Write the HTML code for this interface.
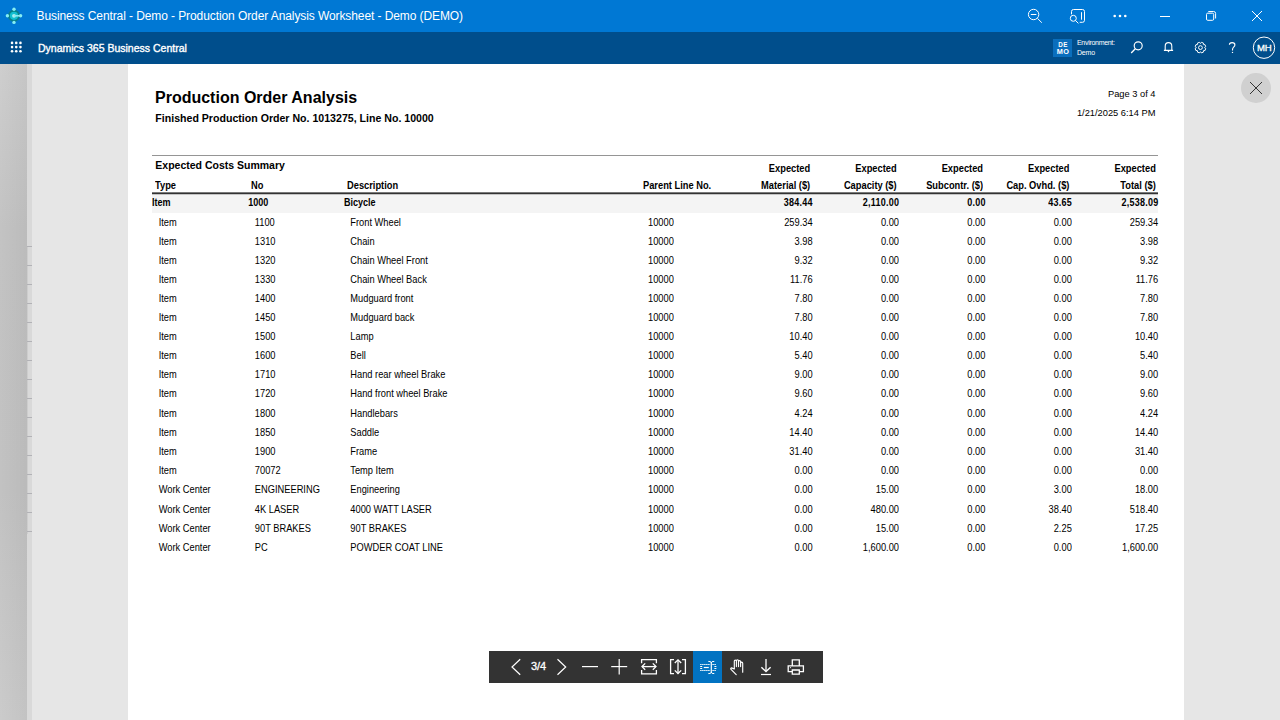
<!DOCTYPE html>
<html><head><meta charset="utf-8"><title>Production Order Analysis</title>
<style>
html,body{margin:0;padding:0;width:1280px;height:720px;overflow:hidden;background:#fff}
body{position:relative;font-family:"Liberation Sans", sans-serif}
div{box-sizing:border-box}
</style></head><body>
<div style="position:absolute;left:0;top:0;width:1280px;height:32px;background:#0078d4"></div>
<svg style="position:absolute;left:0;top:0" width="32" height="32" viewBox="0 0 32 32">
<rect x="8.7" y="10.5" width="10.6" height="10.6" rx="3.6" transform="rotate(45 14 15.8)" fill="#08808a"/>
<circle cx="14" cy="15.8" r="6" fill="#08808a"/>
<circle cx="14" cy="15.8" r="4.1" fill="#12bfd0"/>
<circle cx="14" cy="15.8" r="1.9" fill="#a6eef3"/>
<circle cx="14" cy="9.3" r="1.7" fill="#86eef3"/>
<circle cx="14" cy="22.4" r="1.7" fill="#86eef3"/>
<circle cx="7.4" cy="15.8" r="1.7" fill="#86eef3"/>
<circle cx="20.6" cy="15.8" r="1.7" fill="#86eef3"/>
<rect x="14" y="15" width="5.5" height="1.6" fill="#8fe6ee"/>
</svg>
<div style="position:absolute;left:36.5px;top:9.64px;font-size:12px;line-height:12px;font-weight:normal;color:#fff;white-space:nowrap;letter-spacing:-0.09px;">Business Central - Demo - Production Order Analysis Worksheet - Demo (DEMO)</div>
<svg style="position:absolute;left:1000px;top:0" width="280" height="32" viewBox="1000 0 280 32" fill="none" stroke="#fff" stroke-width="1">
<circle cx="1033.6" cy="14.5" r="5.2"/>
<line x1="1030.8" y1="14.5" x2="1036.4" y2="14.5"/>
<line x1="1037.4" y1="18.3" x2="1041.8" y2="22.7"/>
<path d="M1071.5 14.3 V11.5 a2 2 0 0 1 2 -2 H1082.5 a2 2 0 0 1 2 2 V20.3 a2 2 0 0 1 -2 2 H1079.7"/>
<line x1="1081.5" y1="12.2" x2="1081.5" y2="19.7"/>
<circle cx="1073.3" cy="18.3" r="3"/>
<line x1="1075.4" y1="20.4" x2="1078.4" y2="23.4"/>
<line x1="1160" y1="16.5" x2="1170" y2="16.5"/>
<rect x="1206.5" y="13.2" width="7.2" height="7.1" rx="1.2"/>
<path d="M1208.3 11.5 H1213.6 a2 2 0 0 1 2 2 V18.5"/>
<line x1="1252" y1="11" x2="1262" y2="21"/>
<line x1="1262" y1="11" x2="1252" y2="21"/>
</svg>
<svg style="position:absolute;left:1100px;top:0" width="40" height="32">
<circle cx="14.7" cy="16" r="1.3" fill="#fff"/><circle cx="20" cy="16" r="1.3" fill="#fff"/><circle cx="25.3" cy="16" r="1.3" fill="#fff"/>
</svg>
<div style="position:absolute;left:0;top:32px;width:1280px;height:32px;background:#004e8c"></div>
<svg style="position:absolute;left:0;top:0" width="40" height="64"><circle cx="12.05" cy="42.90" r="1.3" fill="#fff"/><circle cx="12.05" cy="47.10" r="1.3" fill="#fff"/><circle cx="12.05" cy="51.30" r="1.3" fill="#fff"/><circle cx="16.25" cy="42.90" r="1.3" fill="#fff"/><circle cx="16.25" cy="47.10" r="1.3" fill="#fff"/><circle cx="16.25" cy="51.30" r="1.3" fill="#fff"/><circle cx="20.45" cy="42.90" r="1.3" fill="#fff"/><circle cx="20.45" cy="47.10" r="1.3" fill="#fff"/><circle cx="20.45" cy="51.30" r="1.3" fill="#fff"/></svg>
<div style="position:absolute;left:38px;top:43.11px;font-size:10.5px;line-height:10.5px;font-weight:normal;color:#fff;white-space:nowrap;-webkit-text-stroke:0.35px #fff;">Dynamics 365 Business Central</div>
<div style="position:absolute;left:1053px;top:39px;width:19px;height:18px;background:#0a6ebd"></div>
<div style="position:absolute;left:763.0px;width:600px;text-align:center;top:41.57px;font-size:6.3px;line-height:6.3px;font-weight:bold;color:#fff;white-space:nowrap;letter-spacing:0.4px;">DE</div>
<div style="position:absolute;left:762.9000000000001px;width:600px;text-align:center;top:48.67px;font-size:6.3px;line-height:6.3px;font-weight:bold;color:#fff;white-space:nowrap;letter-spacing:0.2px;transform:scaleX(1.16);">MO</div>
<div style="position:absolute;left:1077px;top:39.07px;font-size:7px;line-height:7px;font-weight:normal;color:#fff;white-space:nowrap;letter-spacing:-0.3px;">Environment:</div>
<div style="position:absolute;left:1077px;top:48.87px;font-size:7px;line-height:7px;font-weight:normal;color:#fff;white-space:nowrap;letter-spacing:-0.2px;">Demo</div>
<svg style="position:absolute;left:1100px;top:32px" width="180" height="32" viewBox="1100 32 180 32" fill="none" stroke="#fff" stroke-width="1">
<circle cx="1138.2" cy="45.8" r="4" stroke-width="1.15"/>
<line x1="1135.3" y1="48.8" x2="1131.2" y2="53" stroke-width="1.3"/>
<path d="M1163.9 50.4 H1173.1 M1165.2 50.4 V46.2 C1165.2 43.8 1166.6 42.6 1168.5 42.6 C1170.4 42.6 1171.8 43.8 1171.8 46.2 V50.4" stroke-width="1.1"/>
<path d="M1167.5 50.9 L1168.5 52.5 L1169.5 50.9 Z" fill="#fff" stroke="none"/>
<path d="M1200.72 43.31 L1201.48 42.30 L1203.47 43.12 L1203.29 44.37 L1203.68 44.76 L1204.93 44.58 L1205.75 46.57 L1204.74 47.33 L1204.74 47.87 L1205.75 48.63 L1204.93 50.62 L1203.68 50.44 L1203.29 50.83 L1203.47 52.08 L1201.48 52.90 L1200.72 51.89 L1200.18 51.89 L1199.42 52.90 L1197.43 52.08 L1197.61 50.83 L1197.22 50.44 L1195.97 50.62 L1195.15 48.63 L1196.16 47.87 L1196.16 47.33 L1195.15 46.57 L1195.97 44.58 L1197.22 44.76 L1197.61 44.37 L1197.43 43.12 L1199.42 42.30 L1200.18 43.31 Z" stroke-width="1" stroke-linejoin="round"/>
<circle cx="1200.45" cy="47.6" r="1.9" stroke-width="1"/>
<path d="M1229.4 44.8 C1229.4 43.3 1230.6 42.6 1232.1 42.6 C1233.8 42.6 1234.9 43.6 1234.9 44.9 C1234.9 46.4 1233.6 47 1233 47.8 C1232.6 48.3 1232.5 48.9 1232.5 50.6" stroke-width="1.1"/>
<rect x="1231.9" y="51.9" width="1.2" height="1.1" fill="#fff" stroke="none"/>
<circle cx="1264" cy="47.7" r="10.7"/>
</svg>
<div style="position:absolute;left:964.2px;width:600px;text-align:center;top:42.97px;font-size:9.6px;line-height:9.6px;font-weight:normal;color:#fff;white-space:nowrap;letter-spacing:-0.2px;-webkit-text-stroke:0.3px #fff;">MH</div>
<div style="position:absolute;left:0;top:64px;width:1280px;height:656px;background:#e6e6e6"></div>
<div style="position:absolute;left:0;top:64px;width:27px;height:656px;background:linear-gradient(90deg,rgba(0,0,0,0),rgba(0,0,0,0.04)),linear-gradient(180deg,#cecece 0%,#c3c3c3 25%,#c2c2c2 65%,#cbcbcb 100%)"></div>
<div style="position:absolute;left:27px;top:64px;width:5px;height:656px;background:#d9d9d9"></div>
<div style="position:absolute;left:27px;top:246px;width:1px;height:288px;background:#cdcdcd"></div>
<div style="position:absolute;left:27px;top:245.80px;width:5px;height:1px;background:#b2b2b6"></div>
<div style="position:absolute;left:27px;top:264.81px;width:5px;height:1px;background:#b2b2b6"></div>
<div style="position:absolute;left:27px;top:283.82px;width:5px;height:1px;background:#b2b2b6"></div>
<div style="position:absolute;left:27px;top:302.83px;width:5px;height:1px;background:#b2b2b6"></div>
<div style="position:absolute;left:27px;top:321.84px;width:5px;height:1px;background:#b2b2b6"></div>
<div style="position:absolute;left:27px;top:340.85px;width:5px;height:1px;background:#b2b2b6"></div>
<div style="position:absolute;left:27px;top:359.86px;width:5px;height:1px;background:#b2b2b6"></div>
<div style="position:absolute;left:27px;top:378.87px;width:5px;height:1px;background:#b2b2b6"></div>
<div style="position:absolute;left:27px;top:397.88px;width:5px;height:1px;background:#b2b2b6"></div>
<div style="position:absolute;left:27px;top:416.89px;width:5px;height:1px;background:#b2b2b6"></div>
<div style="position:absolute;left:27px;top:435.90px;width:5px;height:1px;background:#b2b2b6"></div>
<div style="position:absolute;left:27px;top:454.91px;width:5px;height:1px;background:#b2b2b6"></div>
<div style="position:absolute;left:27px;top:473.92px;width:5px;height:1px;background:#b2b2b6"></div>
<div style="position:absolute;left:27px;top:492.93px;width:5px;height:1px;background:#b2b2b6"></div>
<div style="position:absolute;left:27px;top:511.94px;width:5px;height:1px;background:#b2b2b6"></div>
<div style="position:absolute;left:27px;top:530.95px;width:5px;height:1px;background:#b2b2b6"></div>
<div style="position:absolute;left:128px;top:64px;width:1056px;height:656px;background:#fff"></div>
<div style="position:absolute;left:1241px;top:72.5px;width:30px;height:30px;border-radius:50%;background:#d0d0d0"></div>
<svg style="position:absolute;left:1240px;top:72px" width="32" height="32" viewBox="1240 72 32 32" stroke="#333" stroke-width="1">
<line x1="1250" y1="82" x2="1262" y2="94"/><line x1="1262" y1="82" x2="1250" y2="94"/></svg>
<div style="position:absolute;left:155px;top:90.06px;font-size:16px;line-height:16px;font-weight:bold;color:#000;white-space:nowrap;">Production Order Analysis</div>
<div style="position:absolute;left:155.3px;top:112.53px;font-size:10.6px;line-height:10.6px;font-weight:bold;color:#000;white-space:nowrap;">Finished Production Order No. 1013275, Line No. 10000</div>
<div style="position:absolute;right:124.5px;top:90.23px;font-size:9.3px;line-height:9.3px;font-weight:normal;color:#000;white-space:nowrap;transform:scaleY(1.04);transform-origin:50% 4.54px;">Page 3 of 4</div>
<div style="position:absolute;right:124.5px;top:109.23px;font-size:9.3px;line-height:9.3px;font-weight:normal;color:#000;white-space:nowrap;transform:scaleY(1.04);transform-origin:50% 4.54px;">1/21/2025 6:14 PM</div>
<div style="position:absolute;left:152px;top:155px;width:1006px;height:1px;background:#959595"></div>
<div style="position:absolute;left:155.3px;top:159.71px;font-size:10.5px;line-height:10.5px;font-weight:bold;color:#000;white-space:nowrap;">Expected Costs Summary</div>
<div style="position:absolute;left:155px;top:182.03px;font-size:9.3px;line-height:9.3px;font-weight:bold;color:#000;white-space:nowrap;transform:scaleY(1.1);transform-origin:50% 4.54px;">Type</div>
<div style="position:absolute;left:251px;top:182.03px;font-size:9.3px;line-height:9.3px;font-weight:bold;color:#000;white-space:nowrap;transform:scaleY(1.1);transform-origin:50% 4.54px;">No</div>
<div style="position:absolute;left:347px;top:182.03px;font-size:9.3px;line-height:9.3px;font-weight:bold;color:#000;white-space:nowrap;transform:scaleY(1.1);transform-origin:50% 4.54px;">Description</div>
<div style="position:absolute;left:643px;top:182.03px;font-size:9.3px;line-height:9.3px;font-weight:bold;color:#000;white-space:nowrap;transform:scaleY(1.1);transform-origin:50% 4.54px;">Parent Line No.</div>
<div style="position:absolute;right:469.79999999999995px;top:164.73px;font-size:9.3px;line-height:9.3px;font-weight:bold;color:#000;white-space:nowrap;transform:scaleY(1.1);transform-origin:50% 4.54px;">Expected</div>
<div style="position:absolute;right:469.79999999999995px;top:182.03px;font-size:9.3px;line-height:9.3px;font-weight:bold;color:#000;white-space:nowrap;transform:scaleY(1.1);transform-origin:50% 4.54px;">Material ($)</div>
<div style="position:absolute;right:383.4px;top:164.73px;font-size:9.3px;line-height:9.3px;font-weight:bold;color:#000;white-space:nowrap;transform:scaleY(1.1);transform-origin:50% 4.54px;">Expected</div>
<div style="position:absolute;right:383.4px;top:182.03px;font-size:9.3px;line-height:9.3px;font-weight:bold;color:#000;white-space:nowrap;transform:scaleY(1.1);transform-origin:50% 4.54px;">Capacity ($)</div>
<div style="position:absolute;right:297px;top:164.73px;font-size:9.3px;line-height:9.3px;font-weight:bold;color:#000;white-space:nowrap;transform:scaleY(1.1);transform-origin:50% 4.54px;">Expected</div>
<div style="position:absolute;right:297px;top:182.03px;font-size:9.3px;line-height:9.3px;font-weight:bold;color:#000;white-space:nowrap;transform:scaleY(1.1);transform-origin:50% 4.54px;">Subcontr. ($)</div>
<div style="position:absolute;right:210.5999999999999px;top:164.73px;font-size:9.3px;line-height:9.3px;font-weight:bold;color:#000;white-space:nowrap;transform:scaleY(1.1);transform-origin:50% 4.54px;">Expected</div>
<div style="position:absolute;right:210.5999999999999px;top:182.03px;font-size:9.3px;line-height:9.3px;font-weight:bold;color:#000;white-space:nowrap;transform:scaleY(1.1);transform-origin:50% 4.54px;">Cap. Ovhd. ($)</div>
<div style="position:absolute;right:124.20000000000005px;top:164.73px;font-size:9.3px;line-height:9.3px;font-weight:bold;color:#000;white-space:nowrap;transform:scaleY(1.1);transform-origin:50% 4.54px;">Expected</div>
<div style="position:absolute;right:124.20000000000005px;top:182.03px;font-size:9.3px;line-height:9.3px;font-weight:bold;color:#000;white-space:nowrap;transform:scaleY(1.1);transform-origin:50% 4.54px;">Total ($)</div>
<div style="position:absolute;left:152px;top:192px;width:1006px;height:1px;background:#7a7a7a"></div>
<div style="position:absolute;left:152px;top:193px;width:1006px;height:1px;background:#333"></div>
<div style="position:absolute;left:152px;top:194px;width:1006px;height:1px;background:#c4c4c4"></div>
<div style="position:absolute;left:152px;top:195px;width:1006px;height:18px;background:#f4f4f4"></div>
<div style="position:absolute;left:152px;top:197.88px;font-size:9px;line-height:9px;font-weight:bold;color:#000;white-space:nowrap;transform:scaleY(1.2);transform-origin:50% 4.39px;">Item</div>
<div style="position:absolute;left:248.2px;top:197.88px;font-size:9px;line-height:9px;font-weight:bold;color:#000;white-space:nowrap;transform:scaleY(1.2);transform-origin:50% 4.39px;">1000</div>
<div style="position:absolute;left:344px;top:197.88px;font-size:9px;line-height:9px;font-weight:bold;color:#000;white-space:nowrap;transform:scaleY(1.2);transform-origin:50% 4.39px;">Bicycle</div>
<div style="position:absolute;right:467.15px;top:197.88px;font-size:9px;line-height:9px;font-weight:bold;color:#000;white-space:nowrap;transform:scaleY(1.2);transform-origin:50% 4.39px;letter-spacing:0.25px;">384.44</div>
<div style="position:absolute;right:380.75px;top:197.88px;font-size:9px;line-height:9px;font-weight:bold;color:#000;white-space:nowrap;transform:scaleY(1.2);transform-origin:50% 4.39px;letter-spacing:0.25px;">2,110.00</div>
<div style="position:absolute;right:294.35px;top:197.88px;font-size:9px;line-height:9px;font-weight:bold;color:#000;white-space:nowrap;transform:scaleY(1.2);transform-origin:50% 4.39px;letter-spacing:0.25px;">0.00</div>
<div style="position:absolute;right:207.95000000000005px;top:197.88px;font-size:9px;line-height:9px;font-weight:bold;color:#000;white-space:nowrap;transform:scaleY(1.2);transform-origin:50% 4.39px;letter-spacing:0.25px;">43.65</div>
<div style="position:absolute;right:121.54999999999995px;top:197.88px;font-size:9px;line-height:9px;font-weight:bold;color:#000;white-space:nowrap;transform:scaleY(1.2);transform-origin:50% 4.39px;letter-spacing:0.25px;">2,538.09</div>
<div style="position:absolute;left:158.7px;top:218.63px;font-size:9.3px;line-height:9.3px;font-weight:normal;color:#000;white-space:nowrap;transform:scaleY(1.15);transform-origin:50% 4.54px;">Item</div>
<div style="position:absolute;left:254.8px;top:218.63px;font-size:9.3px;line-height:9.3px;font-weight:normal;color:#000;white-space:nowrap;transform:scaleY(1.15);transform-origin:50% 4.54px;">1100</div>
<div style="position:absolute;left:350.3px;top:218.63px;font-size:9.3px;line-height:9.3px;font-weight:normal;color:#000;white-space:nowrap;transform:scaleY(1.15);transform-origin:50% 4.54px;">Front Wheel</div>
<div style="position:absolute;left:648px;top:218.63px;font-size:9.3px;line-height:9.3px;font-weight:normal;color:#000;white-space:nowrap;transform:scaleY(1.15);transform-origin:50% 4.54px;">10000</div>
<div style="position:absolute;right:467.4px;top:218.63px;font-size:9.3px;line-height:9.3px;font-weight:normal;color:#000;white-space:nowrap;transform:scaleY(1.15);transform-origin:50% 4.54px;">259.34</div>
<div style="position:absolute;right:381px;top:218.63px;font-size:9.3px;line-height:9.3px;font-weight:normal;color:#000;white-space:nowrap;transform:scaleY(1.15);transform-origin:50% 4.54px;">0.00</div>
<div style="position:absolute;right:294.6px;top:218.63px;font-size:9.3px;line-height:9.3px;font-weight:normal;color:#000;white-space:nowrap;transform:scaleY(1.15);transform-origin:50% 4.54px;">0.00</div>
<div style="position:absolute;right:208.20000000000005px;top:218.63px;font-size:9.3px;line-height:9.3px;font-weight:normal;color:#000;white-space:nowrap;transform:scaleY(1.15);transform-origin:50% 4.54px;">0.00</div>
<div style="position:absolute;right:121.79999999999995px;top:218.63px;font-size:9.3px;line-height:9.3px;font-weight:normal;color:#000;white-space:nowrap;transform:scaleY(1.15);transform-origin:50% 4.54px;">259.34</div>
<div style="position:absolute;left:158.7px;top:237.63px;font-size:9.3px;line-height:9.3px;font-weight:normal;color:#000;white-space:nowrap;transform:scaleY(1.15);transform-origin:50% 4.54px;">Item</div>
<div style="position:absolute;left:254.8px;top:237.63px;font-size:9.3px;line-height:9.3px;font-weight:normal;color:#000;white-space:nowrap;transform:scaleY(1.15);transform-origin:50% 4.54px;">1310</div>
<div style="position:absolute;left:350.3px;top:237.63px;font-size:9.3px;line-height:9.3px;font-weight:normal;color:#000;white-space:nowrap;transform:scaleY(1.15);transform-origin:50% 4.54px;">Chain</div>
<div style="position:absolute;left:648px;top:237.63px;font-size:9.3px;line-height:9.3px;font-weight:normal;color:#000;white-space:nowrap;transform:scaleY(1.15);transform-origin:50% 4.54px;">10000</div>
<div style="position:absolute;right:467.4px;top:237.63px;font-size:9.3px;line-height:9.3px;font-weight:normal;color:#000;white-space:nowrap;transform:scaleY(1.15);transform-origin:50% 4.54px;">3.98</div>
<div style="position:absolute;right:381px;top:237.63px;font-size:9.3px;line-height:9.3px;font-weight:normal;color:#000;white-space:nowrap;transform:scaleY(1.15);transform-origin:50% 4.54px;">0.00</div>
<div style="position:absolute;right:294.6px;top:237.63px;font-size:9.3px;line-height:9.3px;font-weight:normal;color:#000;white-space:nowrap;transform:scaleY(1.15);transform-origin:50% 4.54px;">0.00</div>
<div style="position:absolute;right:208.20000000000005px;top:237.63px;font-size:9.3px;line-height:9.3px;font-weight:normal;color:#000;white-space:nowrap;transform:scaleY(1.15);transform-origin:50% 4.54px;">0.00</div>
<div style="position:absolute;right:121.79999999999995px;top:237.63px;font-size:9.3px;line-height:9.3px;font-weight:normal;color:#000;white-space:nowrap;transform:scaleY(1.15);transform-origin:50% 4.54px;">3.98</div>
<div style="position:absolute;left:158.7px;top:256.63px;font-size:9.3px;line-height:9.3px;font-weight:normal;color:#000;white-space:nowrap;transform:scaleY(1.15);transform-origin:50% 4.54px;">Item</div>
<div style="position:absolute;left:254.8px;top:256.63px;font-size:9.3px;line-height:9.3px;font-weight:normal;color:#000;white-space:nowrap;transform:scaleY(1.15);transform-origin:50% 4.54px;">1320</div>
<div style="position:absolute;left:350.3px;top:256.63px;font-size:9.3px;line-height:9.3px;font-weight:normal;color:#000;white-space:nowrap;transform:scaleY(1.15);transform-origin:50% 4.54px;">Chain Wheel Front</div>
<div style="position:absolute;left:648px;top:256.63px;font-size:9.3px;line-height:9.3px;font-weight:normal;color:#000;white-space:nowrap;transform:scaleY(1.15);transform-origin:50% 4.54px;">10000</div>
<div style="position:absolute;right:467.4px;top:256.63px;font-size:9.3px;line-height:9.3px;font-weight:normal;color:#000;white-space:nowrap;transform:scaleY(1.15);transform-origin:50% 4.54px;">9.32</div>
<div style="position:absolute;right:381px;top:256.63px;font-size:9.3px;line-height:9.3px;font-weight:normal;color:#000;white-space:nowrap;transform:scaleY(1.15);transform-origin:50% 4.54px;">0.00</div>
<div style="position:absolute;right:294.6px;top:256.63px;font-size:9.3px;line-height:9.3px;font-weight:normal;color:#000;white-space:nowrap;transform:scaleY(1.15);transform-origin:50% 4.54px;">0.00</div>
<div style="position:absolute;right:208.20000000000005px;top:256.63px;font-size:9.3px;line-height:9.3px;font-weight:normal;color:#000;white-space:nowrap;transform:scaleY(1.15);transform-origin:50% 4.54px;">0.00</div>
<div style="position:absolute;right:121.79999999999995px;top:256.63px;font-size:9.3px;line-height:9.3px;font-weight:normal;color:#000;white-space:nowrap;transform:scaleY(1.15);transform-origin:50% 4.54px;">9.32</div>
<div style="position:absolute;left:158.7px;top:275.63px;font-size:9.3px;line-height:9.3px;font-weight:normal;color:#000;white-space:nowrap;transform:scaleY(1.15);transform-origin:50% 4.54px;">Item</div>
<div style="position:absolute;left:254.8px;top:275.63px;font-size:9.3px;line-height:9.3px;font-weight:normal;color:#000;white-space:nowrap;transform:scaleY(1.15);transform-origin:50% 4.54px;">1330</div>
<div style="position:absolute;left:350.3px;top:275.63px;font-size:9.3px;line-height:9.3px;font-weight:normal;color:#000;white-space:nowrap;transform:scaleY(1.15);transform-origin:50% 4.54px;">Chain Wheel Back</div>
<div style="position:absolute;left:648px;top:275.63px;font-size:9.3px;line-height:9.3px;font-weight:normal;color:#000;white-space:nowrap;transform:scaleY(1.15);transform-origin:50% 4.54px;">10000</div>
<div style="position:absolute;right:467.4px;top:275.63px;font-size:9.3px;line-height:9.3px;font-weight:normal;color:#000;white-space:nowrap;transform:scaleY(1.15);transform-origin:50% 4.54px;">11.76</div>
<div style="position:absolute;right:381px;top:275.63px;font-size:9.3px;line-height:9.3px;font-weight:normal;color:#000;white-space:nowrap;transform:scaleY(1.15);transform-origin:50% 4.54px;">0.00</div>
<div style="position:absolute;right:294.6px;top:275.63px;font-size:9.3px;line-height:9.3px;font-weight:normal;color:#000;white-space:nowrap;transform:scaleY(1.15);transform-origin:50% 4.54px;">0.00</div>
<div style="position:absolute;right:208.20000000000005px;top:275.63px;font-size:9.3px;line-height:9.3px;font-weight:normal;color:#000;white-space:nowrap;transform:scaleY(1.15);transform-origin:50% 4.54px;">0.00</div>
<div style="position:absolute;right:121.79999999999995px;top:275.63px;font-size:9.3px;line-height:9.3px;font-weight:normal;color:#000;white-space:nowrap;transform:scaleY(1.15);transform-origin:50% 4.54px;">11.76</div>
<div style="position:absolute;left:158.7px;top:294.63px;font-size:9.3px;line-height:9.3px;font-weight:normal;color:#000;white-space:nowrap;transform:scaleY(1.15);transform-origin:50% 4.54px;">Item</div>
<div style="position:absolute;left:254.8px;top:294.63px;font-size:9.3px;line-height:9.3px;font-weight:normal;color:#000;white-space:nowrap;transform:scaleY(1.15);transform-origin:50% 4.54px;">1400</div>
<div style="position:absolute;left:350.3px;top:294.63px;font-size:9.3px;line-height:9.3px;font-weight:normal;color:#000;white-space:nowrap;transform:scaleY(1.15);transform-origin:50% 4.54px;">Mudguard front</div>
<div style="position:absolute;left:648px;top:294.63px;font-size:9.3px;line-height:9.3px;font-weight:normal;color:#000;white-space:nowrap;transform:scaleY(1.15);transform-origin:50% 4.54px;">10000</div>
<div style="position:absolute;right:467.4px;top:294.63px;font-size:9.3px;line-height:9.3px;font-weight:normal;color:#000;white-space:nowrap;transform:scaleY(1.15);transform-origin:50% 4.54px;">7.80</div>
<div style="position:absolute;right:381px;top:294.63px;font-size:9.3px;line-height:9.3px;font-weight:normal;color:#000;white-space:nowrap;transform:scaleY(1.15);transform-origin:50% 4.54px;">0.00</div>
<div style="position:absolute;right:294.6px;top:294.63px;font-size:9.3px;line-height:9.3px;font-weight:normal;color:#000;white-space:nowrap;transform:scaleY(1.15);transform-origin:50% 4.54px;">0.00</div>
<div style="position:absolute;right:208.20000000000005px;top:294.63px;font-size:9.3px;line-height:9.3px;font-weight:normal;color:#000;white-space:nowrap;transform:scaleY(1.15);transform-origin:50% 4.54px;">0.00</div>
<div style="position:absolute;right:121.79999999999995px;top:294.63px;font-size:9.3px;line-height:9.3px;font-weight:normal;color:#000;white-space:nowrap;transform:scaleY(1.15);transform-origin:50% 4.54px;">7.80</div>
<div style="position:absolute;left:158.7px;top:313.63px;font-size:9.3px;line-height:9.3px;font-weight:normal;color:#000;white-space:nowrap;transform:scaleY(1.15);transform-origin:50% 4.54px;">Item</div>
<div style="position:absolute;left:254.8px;top:313.63px;font-size:9.3px;line-height:9.3px;font-weight:normal;color:#000;white-space:nowrap;transform:scaleY(1.15);transform-origin:50% 4.54px;">1450</div>
<div style="position:absolute;left:350.3px;top:313.63px;font-size:9.3px;line-height:9.3px;font-weight:normal;color:#000;white-space:nowrap;transform:scaleY(1.15);transform-origin:50% 4.54px;">Mudguard back</div>
<div style="position:absolute;left:648px;top:313.63px;font-size:9.3px;line-height:9.3px;font-weight:normal;color:#000;white-space:nowrap;transform:scaleY(1.15);transform-origin:50% 4.54px;">10000</div>
<div style="position:absolute;right:467.4px;top:313.63px;font-size:9.3px;line-height:9.3px;font-weight:normal;color:#000;white-space:nowrap;transform:scaleY(1.15);transform-origin:50% 4.54px;">7.80</div>
<div style="position:absolute;right:381px;top:313.63px;font-size:9.3px;line-height:9.3px;font-weight:normal;color:#000;white-space:nowrap;transform:scaleY(1.15);transform-origin:50% 4.54px;">0.00</div>
<div style="position:absolute;right:294.6px;top:313.63px;font-size:9.3px;line-height:9.3px;font-weight:normal;color:#000;white-space:nowrap;transform:scaleY(1.15);transform-origin:50% 4.54px;">0.00</div>
<div style="position:absolute;right:208.20000000000005px;top:313.63px;font-size:9.3px;line-height:9.3px;font-weight:normal;color:#000;white-space:nowrap;transform:scaleY(1.15);transform-origin:50% 4.54px;">0.00</div>
<div style="position:absolute;right:121.79999999999995px;top:313.63px;font-size:9.3px;line-height:9.3px;font-weight:normal;color:#000;white-space:nowrap;transform:scaleY(1.15);transform-origin:50% 4.54px;">7.80</div>
<div style="position:absolute;left:158.7px;top:332.63px;font-size:9.3px;line-height:9.3px;font-weight:normal;color:#000;white-space:nowrap;transform:scaleY(1.15);transform-origin:50% 4.54px;">Item</div>
<div style="position:absolute;left:254.8px;top:332.63px;font-size:9.3px;line-height:9.3px;font-weight:normal;color:#000;white-space:nowrap;transform:scaleY(1.15);transform-origin:50% 4.54px;">1500</div>
<div style="position:absolute;left:350.3px;top:332.63px;font-size:9.3px;line-height:9.3px;font-weight:normal;color:#000;white-space:nowrap;transform:scaleY(1.15);transform-origin:50% 4.54px;">Lamp</div>
<div style="position:absolute;left:648px;top:332.63px;font-size:9.3px;line-height:9.3px;font-weight:normal;color:#000;white-space:nowrap;transform:scaleY(1.15);transform-origin:50% 4.54px;">10000</div>
<div style="position:absolute;right:467.4px;top:332.63px;font-size:9.3px;line-height:9.3px;font-weight:normal;color:#000;white-space:nowrap;transform:scaleY(1.15);transform-origin:50% 4.54px;">10.40</div>
<div style="position:absolute;right:381px;top:332.63px;font-size:9.3px;line-height:9.3px;font-weight:normal;color:#000;white-space:nowrap;transform:scaleY(1.15);transform-origin:50% 4.54px;">0.00</div>
<div style="position:absolute;right:294.6px;top:332.63px;font-size:9.3px;line-height:9.3px;font-weight:normal;color:#000;white-space:nowrap;transform:scaleY(1.15);transform-origin:50% 4.54px;">0.00</div>
<div style="position:absolute;right:208.20000000000005px;top:332.63px;font-size:9.3px;line-height:9.3px;font-weight:normal;color:#000;white-space:nowrap;transform:scaleY(1.15);transform-origin:50% 4.54px;">0.00</div>
<div style="position:absolute;right:121.79999999999995px;top:332.63px;font-size:9.3px;line-height:9.3px;font-weight:normal;color:#000;white-space:nowrap;transform:scaleY(1.15);transform-origin:50% 4.54px;">10.40</div>
<div style="position:absolute;left:158.7px;top:351.63px;font-size:9.3px;line-height:9.3px;font-weight:normal;color:#000;white-space:nowrap;transform:scaleY(1.15);transform-origin:50% 4.54px;">Item</div>
<div style="position:absolute;left:254.8px;top:351.63px;font-size:9.3px;line-height:9.3px;font-weight:normal;color:#000;white-space:nowrap;transform:scaleY(1.15);transform-origin:50% 4.54px;">1600</div>
<div style="position:absolute;left:350.3px;top:351.63px;font-size:9.3px;line-height:9.3px;font-weight:normal;color:#000;white-space:nowrap;transform:scaleY(1.15);transform-origin:50% 4.54px;">Bell</div>
<div style="position:absolute;left:648px;top:351.63px;font-size:9.3px;line-height:9.3px;font-weight:normal;color:#000;white-space:nowrap;transform:scaleY(1.15);transform-origin:50% 4.54px;">10000</div>
<div style="position:absolute;right:467.4px;top:351.63px;font-size:9.3px;line-height:9.3px;font-weight:normal;color:#000;white-space:nowrap;transform:scaleY(1.15);transform-origin:50% 4.54px;">5.40</div>
<div style="position:absolute;right:381px;top:351.63px;font-size:9.3px;line-height:9.3px;font-weight:normal;color:#000;white-space:nowrap;transform:scaleY(1.15);transform-origin:50% 4.54px;">0.00</div>
<div style="position:absolute;right:294.6px;top:351.63px;font-size:9.3px;line-height:9.3px;font-weight:normal;color:#000;white-space:nowrap;transform:scaleY(1.15);transform-origin:50% 4.54px;">0.00</div>
<div style="position:absolute;right:208.20000000000005px;top:351.63px;font-size:9.3px;line-height:9.3px;font-weight:normal;color:#000;white-space:nowrap;transform:scaleY(1.15);transform-origin:50% 4.54px;">0.00</div>
<div style="position:absolute;right:121.79999999999995px;top:351.63px;font-size:9.3px;line-height:9.3px;font-weight:normal;color:#000;white-space:nowrap;transform:scaleY(1.15);transform-origin:50% 4.54px;">5.40</div>
<div style="position:absolute;left:158.7px;top:370.63px;font-size:9.3px;line-height:9.3px;font-weight:normal;color:#000;white-space:nowrap;transform:scaleY(1.15);transform-origin:50% 4.54px;">Item</div>
<div style="position:absolute;left:254.8px;top:370.63px;font-size:9.3px;line-height:9.3px;font-weight:normal;color:#000;white-space:nowrap;transform:scaleY(1.15);transform-origin:50% 4.54px;">1710</div>
<div style="position:absolute;left:350.3px;top:370.63px;font-size:9.3px;line-height:9.3px;font-weight:normal;color:#000;white-space:nowrap;transform:scaleY(1.15);transform-origin:50% 4.54px;">Hand rear wheel Brake</div>
<div style="position:absolute;left:648px;top:370.63px;font-size:9.3px;line-height:9.3px;font-weight:normal;color:#000;white-space:nowrap;transform:scaleY(1.15);transform-origin:50% 4.54px;">10000</div>
<div style="position:absolute;right:467.4px;top:370.63px;font-size:9.3px;line-height:9.3px;font-weight:normal;color:#000;white-space:nowrap;transform:scaleY(1.15);transform-origin:50% 4.54px;">9.00</div>
<div style="position:absolute;right:381px;top:370.63px;font-size:9.3px;line-height:9.3px;font-weight:normal;color:#000;white-space:nowrap;transform:scaleY(1.15);transform-origin:50% 4.54px;">0.00</div>
<div style="position:absolute;right:294.6px;top:370.63px;font-size:9.3px;line-height:9.3px;font-weight:normal;color:#000;white-space:nowrap;transform:scaleY(1.15);transform-origin:50% 4.54px;">0.00</div>
<div style="position:absolute;right:208.20000000000005px;top:370.63px;font-size:9.3px;line-height:9.3px;font-weight:normal;color:#000;white-space:nowrap;transform:scaleY(1.15);transform-origin:50% 4.54px;">0.00</div>
<div style="position:absolute;right:121.79999999999995px;top:370.63px;font-size:9.3px;line-height:9.3px;font-weight:normal;color:#000;white-space:nowrap;transform:scaleY(1.15);transform-origin:50% 4.54px;">9.00</div>
<div style="position:absolute;left:158.7px;top:389.63px;font-size:9.3px;line-height:9.3px;font-weight:normal;color:#000;white-space:nowrap;transform:scaleY(1.15);transform-origin:50% 4.54px;">Item</div>
<div style="position:absolute;left:254.8px;top:389.63px;font-size:9.3px;line-height:9.3px;font-weight:normal;color:#000;white-space:nowrap;transform:scaleY(1.15);transform-origin:50% 4.54px;">1720</div>
<div style="position:absolute;left:350.3px;top:389.63px;font-size:9.3px;line-height:9.3px;font-weight:normal;color:#000;white-space:nowrap;transform:scaleY(1.15);transform-origin:50% 4.54px;">Hand front wheel Brake</div>
<div style="position:absolute;left:648px;top:389.63px;font-size:9.3px;line-height:9.3px;font-weight:normal;color:#000;white-space:nowrap;transform:scaleY(1.15);transform-origin:50% 4.54px;">10000</div>
<div style="position:absolute;right:467.4px;top:389.63px;font-size:9.3px;line-height:9.3px;font-weight:normal;color:#000;white-space:nowrap;transform:scaleY(1.15);transform-origin:50% 4.54px;">9.60</div>
<div style="position:absolute;right:381px;top:389.63px;font-size:9.3px;line-height:9.3px;font-weight:normal;color:#000;white-space:nowrap;transform:scaleY(1.15);transform-origin:50% 4.54px;">0.00</div>
<div style="position:absolute;right:294.6px;top:389.63px;font-size:9.3px;line-height:9.3px;font-weight:normal;color:#000;white-space:nowrap;transform:scaleY(1.15);transform-origin:50% 4.54px;">0.00</div>
<div style="position:absolute;right:208.20000000000005px;top:389.63px;font-size:9.3px;line-height:9.3px;font-weight:normal;color:#000;white-space:nowrap;transform:scaleY(1.15);transform-origin:50% 4.54px;">0.00</div>
<div style="position:absolute;right:121.79999999999995px;top:389.63px;font-size:9.3px;line-height:9.3px;font-weight:normal;color:#000;white-space:nowrap;transform:scaleY(1.15);transform-origin:50% 4.54px;">9.60</div>
<div style="position:absolute;left:158.7px;top:409.63px;font-size:9.3px;line-height:9.3px;font-weight:normal;color:#000;white-space:nowrap;transform:scaleY(1.15);transform-origin:50% 4.54px;">Item</div>
<div style="position:absolute;left:254.8px;top:409.63px;font-size:9.3px;line-height:9.3px;font-weight:normal;color:#000;white-space:nowrap;transform:scaleY(1.15);transform-origin:50% 4.54px;">1800</div>
<div style="position:absolute;left:350.3px;top:409.63px;font-size:9.3px;line-height:9.3px;font-weight:normal;color:#000;white-space:nowrap;transform:scaleY(1.15);transform-origin:50% 4.54px;">Handlebars</div>
<div style="position:absolute;left:648px;top:409.63px;font-size:9.3px;line-height:9.3px;font-weight:normal;color:#000;white-space:nowrap;transform:scaleY(1.15);transform-origin:50% 4.54px;">10000</div>
<div style="position:absolute;right:467.4px;top:409.63px;font-size:9.3px;line-height:9.3px;font-weight:normal;color:#000;white-space:nowrap;transform:scaleY(1.15);transform-origin:50% 4.54px;">4.24</div>
<div style="position:absolute;right:381px;top:409.63px;font-size:9.3px;line-height:9.3px;font-weight:normal;color:#000;white-space:nowrap;transform:scaleY(1.15);transform-origin:50% 4.54px;">0.00</div>
<div style="position:absolute;right:294.6px;top:409.63px;font-size:9.3px;line-height:9.3px;font-weight:normal;color:#000;white-space:nowrap;transform:scaleY(1.15);transform-origin:50% 4.54px;">0.00</div>
<div style="position:absolute;right:208.20000000000005px;top:409.63px;font-size:9.3px;line-height:9.3px;font-weight:normal;color:#000;white-space:nowrap;transform:scaleY(1.15);transform-origin:50% 4.54px;">0.00</div>
<div style="position:absolute;right:121.79999999999995px;top:409.63px;font-size:9.3px;line-height:9.3px;font-weight:normal;color:#000;white-space:nowrap;transform:scaleY(1.15);transform-origin:50% 4.54px;">4.24</div>
<div style="position:absolute;left:158.7px;top:428.63px;font-size:9.3px;line-height:9.3px;font-weight:normal;color:#000;white-space:nowrap;transform:scaleY(1.15);transform-origin:50% 4.54px;">Item</div>
<div style="position:absolute;left:254.8px;top:428.63px;font-size:9.3px;line-height:9.3px;font-weight:normal;color:#000;white-space:nowrap;transform:scaleY(1.15);transform-origin:50% 4.54px;">1850</div>
<div style="position:absolute;left:350.3px;top:428.63px;font-size:9.3px;line-height:9.3px;font-weight:normal;color:#000;white-space:nowrap;transform:scaleY(1.15);transform-origin:50% 4.54px;">Saddle</div>
<div style="position:absolute;left:648px;top:428.63px;font-size:9.3px;line-height:9.3px;font-weight:normal;color:#000;white-space:nowrap;transform:scaleY(1.15);transform-origin:50% 4.54px;">10000</div>
<div style="position:absolute;right:467.4px;top:428.63px;font-size:9.3px;line-height:9.3px;font-weight:normal;color:#000;white-space:nowrap;transform:scaleY(1.15);transform-origin:50% 4.54px;">14.40</div>
<div style="position:absolute;right:381px;top:428.63px;font-size:9.3px;line-height:9.3px;font-weight:normal;color:#000;white-space:nowrap;transform:scaleY(1.15);transform-origin:50% 4.54px;">0.00</div>
<div style="position:absolute;right:294.6px;top:428.63px;font-size:9.3px;line-height:9.3px;font-weight:normal;color:#000;white-space:nowrap;transform:scaleY(1.15);transform-origin:50% 4.54px;">0.00</div>
<div style="position:absolute;right:208.20000000000005px;top:428.63px;font-size:9.3px;line-height:9.3px;font-weight:normal;color:#000;white-space:nowrap;transform:scaleY(1.15);transform-origin:50% 4.54px;">0.00</div>
<div style="position:absolute;right:121.79999999999995px;top:428.63px;font-size:9.3px;line-height:9.3px;font-weight:normal;color:#000;white-space:nowrap;transform:scaleY(1.15);transform-origin:50% 4.54px;">14.40</div>
<div style="position:absolute;left:158.7px;top:447.63px;font-size:9.3px;line-height:9.3px;font-weight:normal;color:#000;white-space:nowrap;transform:scaleY(1.15);transform-origin:50% 4.54px;">Item</div>
<div style="position:absolute;left:254.8px;top:447.63px;font-size:9.3px;line-height:9.3px;font-weight:normal;color:#000;white-space:nowrap;transform:scaleY(1.15);transform-origin:50% 4.54px;">1900</div>
<div style="position:absolute;left:350.3px;top:447.63px;font-size:9.3px;line-height:9.3px;font-weight:normal;color:#000;white-space:nowrap;transform:scaleY(1.15);transform-origin:50% 4.54px;">Frame</div>
<div style="position:absolute;left:648px;top:447.63px;font-size:9.3px;line-height:9.3px;font-weight:normal;color:#000;white-space:nowrap;transform:scaleY(1.15);transform-origin:50% 4.54px;">10000</div>
<div style="position:absolute;right:467.4px;top:447.63px;font-size:9.3px;line-height:9.3px;font-weight:normal;color:#000;white-space:nowrap;transform:scaleY(1.15);transform-origin:50% 4.54px;">31.40</div>
<div style="position:absolute;right:381px;top:447.63px;font-size:9.3px;line-height:9.3px;font-weight:normal;color:#000;white-space:nowrap;transform:scaleY(1.15);transform-origin:50% 4.54px;">0.00</div>
<div style="position:absolute;right:294.6px;top:447.63px;font-size:9.3px;line-height:9.3px;font-weight:normal;color:#000;white-space:nowrap;transform:scaleY(1.15);transform-origin:50% 4.54px;">0.00</div>
<div style="position:absolute;right:208.20000000000005px;top:447.63px;font-size:9.3px;line-height:9.3px;font-weight:normal;color:#000;white-space:nowrap;transform:scaleY(1.15);transform-origin:50% 4.54px;">0.00</div>
<div style="position:absolute;right:121.79999999999995px;top:447.63px;font-size:9.3px;line-height:9.3px;font-weight:normal;color:#000;white-space:nowrap;transform:scaleY(1.15);transform-origin:50% 4.54px;">31.40</div>
<div style="position:absolute;left:158.7px;top:466.63px;font-size:9.3px;line-height:9.3px;font-weight:normal;color:#000;white-space:nowrap;transform:scaleY(1.15);transform-origin:50% 4.54px;">Item</div>
<div style="position:absolute;left:254.8px;top:466.63px;font-size:9.3px;line-height:9.3px;font-weight:normal;color:#000;white-space:nowrap;transform:scaleY(1.15);transform-origin:50% 4.54px;">70072</div>
<div style="position:absolute;left:350.3px;top:466.63px;font-size:9.3px;line-height:9.3px;font-weight:normal;color:#000;white-space:nowrap;transform:scaleY(1.15);transform-origin:50% 4.54px;">Temp Item</div>
<div style="position:absolute;left:648px;top:466.63px;font-size:9.3px;line-height:9.3px;font-weight:normal;color:#000;white-space:nowrap;transform:scaleY(1.15);transform-origin:50% 4.54px;">10000</div>
<div style="position:absolute;right:467.4px;top:466.63px;font-size:9.3px;line-height:9.3px;font-weight:normal;color:#000;white-space:nowrap;transform:scaleY(1.15);transform-origin:50% 4.54px;">0.00</div>
<div style="position:absolute;right:381px;top:466.63px;font-size:9.3px;line-height:9.3px;font-weight:normal;color:#000;white-space:nowrap;transform:scaleY(1.15);transform-origin:50% 4.54px;">0.00</div>
<div style="position:absolute;right:294.6px;top:466.63px;font-size:9.3px;line-height:9.3px;font-weight:normal;color:#000;white-space:nowrap;transform:scaleY(1.15);transform-origin:50% 4.54px;">0.00</div>
<div style="position:absolute;right:208.20000000000005px;top:466.63px;font-size:9.3px;line-height:9.3px;font-weight:normal;color:#000;white-space:nowrap;transform:scaleY(1.15);transform-origin:50% 4.54px;">0.00</div>
<div style="position:absolute;right:121.79999999999995px;top:466.63px;font-size:9.3px;line-height:9.3px;font-weight:normal;color:#000;white-space:nowrap;transform:scaleY(1.15);transform-origin:50% 4.54px;">0.00</div>
<div style="position:absolute;left:158.7px;top:485.63px;font-size:9.3px;line-height:9.3px;font-weight:normal;color:#000;white-space:nowrap;transform:scaleY(1.15);transform-origin:50% 4.54px;">Work Center</div>
<div style="position:absolute;left:254.8px;top:485.63px;font-size:9.3px;line-height:9.3px;font-weight:normal;color:#000;white-space:nowrap;transform:scaleY(1.15);transform-origin:50% 4.54px;">ENGINEERING</div>
<div style="position:absolute;left:350.3px;top:485.63px;font-size:9.3px;line-height:9.3px;font-weight:normal;color:#000;white-space:nowrap;transform:scaleY(1.15);transform-origin:50% 4.54px;">Engineering</div>
<div style="position:absolute;left:648px;top:485.63px;font-size:9.3px;line-height:9.3px;font-weight:normal;color:#000;white-space:nowrap;transform:scaleY(1.15);transform-origin:50% 4.54px;">10000</div>
<div style="position:absolute;right:467.4px;top:485.63px;font-size:9.3px;line-height:9.3px;font-weight:normal;color:#000;white-space:nowrap;transform:scaleY(1.15);transform-origin:50% 4.54px;">0.00</div>
<div style="position:absolute;right:381px;top:485.63px;font-size:9.3px;line-height:9.3px;font-weight:normal;color:#000;white-space:nowrap;transform:scaleY(1.15);transform-origin:50% 4.54px;">15.00</div>
<div style="position:absolute;right:294.6px;top:485.63px;font-size:9.3px;line-height:9.3px;font-weight:normal;color:#000;white-space:nowrap;transform:scaleY(1.15);transform-origin:50% 4.54px;">0.00</div>
<div style="position:absolute;right:208.20000000000005px;top:485.63px;font-size:9.3px;line-height:9.3px;font-weight:normal;color:#000;white-space:nowrap;transform:scaleY(1.15);transform-origin:50% 4.54px;">3.00</div>
<div style="position:absolute;right:121.79999999999995px;top:485.63px;font-size:9.3px;line-height:9.3px;font-weight:normal;color:#000;white-space:nowrap;transform:scaleY(1.15);transform-origin:50% 4.54px;">18.00</div>
<div style="position:absolute;left:158.7px;top:505.63px;font-size:9.3px;line-height:9.3px;font-weight:normal;color:#000;white-space:nowrap;transform:scaleY(1.15);transform-origin:50% 4.54px;">Work Center</div>
<div style="position:absolute;left:254.8px;top:505.63px;font-size:9.3px;line-height:9.3px;font-weight:normal;color:#000;white-space:nowrap;transform:scaleY(1.15);transform-origin:50% 4.54px;">4K LASER</div>
<div style="position:absolute;left:350.3px;top:505.63px;font-size:9.3px;line-height:9.3px;font-weight:normal;color:#000;white-space:nowrap;transform:scaleY(1.15);transform-origin:50% 4.54px;">4000 WATT LASER</div>
<div style="position:absolute;left:648px;top:505.63px;font-size:9.3px;line-height:9.3px;font-weight:normal;color:#000;white-space:nowrap;transform:scaleY(1.15);transform-origin:50% 4.54px;">10000</div>
<div style="position:absolute;right:467.4px;top:505.63px;font-size:9.3px;line-height:9.3px;font-weight:normal;color:#000;white-space:nowrap;transform:scaleY(1.15);transform-origin:50% 4.54px;">0.00</div>
<div style="position:absolute;right:381px;top:505.63px;font-size:9.3px;line-height:9.3px;font-weight:normal;color:#000;white-space:nowrap;transform:scaleY(1.15);transform-origin:50% 4.54px;">480.00</div>
<div style="position:absolute;right:294.6px;top:505.63px;font-size:9.3px;line-height:9.3px;font-weight:normal;color:#000;white-space:nowrap;transform:scaleY(1.15);transform-origin:50% 4.54px;">0.00</div>
<div style="position:absolute;right:208.20000000000005px;top:505.63px;font-size:9.3px;line-height:9.3px;font-weight:normal;color:#000;white-space:nowrap;transform:scaleY(1.15);transform-origin:50% 4.54px;">38.40</div>
<div style="position:absolute;right:121.79999999999995px;top:505.63px;font-size:9.3px;line-height:9.3px;font-weight:normal;color:#000;white-space:nowrap;transform:scaleY(1.15);transform-origin:50% 4.54px;">518.40</div>
<div style="position:absolute;left:158.7px;top:524.63px;font-size:9.3px;line-height:9.3px;font-weight:normal;color:#000;white-space:nowrap;transform:scaleY(1.15);transform-origin:50% 4.54px;">Work Center</div>
<div style="position:absolute;left:254.8px;top:524.63px;font-size:9.3px;line-height:9.3px;font-weight:normal;color:#000;white-space:nowrap;transform:scaleY(1.15);transform-origin:50% 4.54px;">90T BRAKES</div>
<div style="position:absolute;left:350.3px;top:524.63px;font-size:9.3px;line-height:9.3px;font-weight:normal;color:#000;white-space:nowrap;transform:scaleY(1.15);transform-origin:50% 4.54px;">90T BRAKES</div>
<div style="position:absolute;left:648px;top:524.63px;font-size:9.3px;line-height:9.3px;font-weight:normal;color:#000;white-space:nowrap;transform:scaleY(1.15);transform-origin:50% 4.54px;">10000</div>
<div style="position:absolute;right:467.4px;top:524.63px;font-size:9.3px;line-height:9.3px;font-weight:normal;color:#000;white-space:nowrap;transform:scaleY(1.15);transform-origin:50% 4.54px;">0.00</div>
<div style="position:absolute;right:381px;top:524.63px;font-size:9.3px;line-height:9.3px;font-weight:normal;color:#000;white-space:nowrap;transform:scaleY(1.15);transform-origin:50% 4.54px;">15.00</div>
<div style="position:absolute;right:294.6px;top:524.63px;font-size:9.3px;line-height:9.3px;font-weight:normal;color:#000;white-space:nowrap;transform:scaleY(1.15);transform-origin:50% 4.54px;">0.00</div>
<div style="position:absolute;right:208.20000000000005px;top:524.63px;font-size:9.3px;line-height:9.3px;font-weight:normal;color:#000;white-space:nowrap;transform:scaleY(1.15);transform-origin:50% 4.54px;">2.25</div>
<div style="position:absolute;right:121.79999999999995px;top:524.63px;font-size:9.3px;line-height:9.3px;font-weight:normal;color:#000;white-space:nowrap;transform:scaleY(1.15);transform-origin:50% 4.54px;">17.25</div>
<div style="position:absolute;left:158.7px;top:543.63px;font-size:9.3px;line-height:9.3px;font-weight:normal;color:#000;white-space:nowrap;transform:scaleY(1.15);transform-origin:50% 4.54px;">Work Center</div>
<div style="position:absolute;left:254.8px;top:543.63px;font-size:9.3px;line-height:9.3px;font-weight:normal;color:#000;white-space:nowrap;transform:scaleY(1.15);transform-origin:50% 4.54px;">PC</div>
<div style="position:absolute;left:350.3px;top:543.63px;font-size:9.3px;line-height:9.3px;font-weight:normal;color:#000;white-space:nowrap;transform:scaleY(1.15);transform-origin:50% 4.54px;">POWDER COAT LINE</div>
<div style="position:absolute;left:648px;top:543.63px;font-size:9.3px;line-height:9.3px;font-weight:normal;color:#000;white-space:nowrap;transform:scaleY(1.15);transform-origin:50% 4.54px;">10000</div>
<div style="position:absolute;right:467.4px;top:543.63px;font-size:9.3px;line-height:9.3px;font-weight:normal;color:#000;white-space:nowrap;transform:scaleY(1.15);transform-origin:50% 4.54px;">0.00</div>
<div style="position:absolute;right:381px;top:543.63px;font-size:9.3px;line-height:9.3px;font-weight:normal;color:#000;white-space:nowrap;transform:scaleY(1.15);transform-origin:50% 4.54px;">1,600.00</div>
<div style="position:absolute;right:294.6px;top:543.63px;font-size:9.3px;line-height:9.3px;font-weight:normal;color:#000;white-space:nowrap;transform:scaleY(1.15);transform-origin:50% 4.54px;">0.00</div>
<div style="position:absolute;right:208.20000000000005px;top:543.63px;font-size:9.3px;line-height:9.3px;font-weight:normal;color:#000;white-space:nowrap;transform:scaleY(1.15);transform-origin:50% 4.54px;">0.00</div>
<div style="position:absolute;right:121.79999999999995px;top:543.63px;font-size:9.3px;line-height:9.3px;font-weight:normal;color:#000;white-space:nowrap;transform:scaleY(1.15);transform-origin:50% 4.54px;">1,600.00</div>
<div style="position:absolute;left:489px;top:651px;width:334px;height:32px;background:#333"></div>
<div style="position:absolute;left:693px;top:651px;width:29px;height:32px;background:#0273c2"></div>
<div style="position:absolute;left:238.60000000000002px;width:600px;text-align:center;top:660.89px;font-size:11px;line-height:11px;font-weight:normal;color:#fff;white-space:nowrap;-webkit-text-stroke:0.3px #fff;">3/4</div>
<svg style="position:absolute;left:489px;top:651px" width="334" height="32" viewBox="489 651 334 32" fill="none" stroke="#fff" stroke-width="1.2">
<polyline points="520.2,659.2 512,667 520.2,674.8"/>
<polyline points="557.5,659.2 565.7,667 557.5,674.8"/>
<line x1="582" y1="666.6" x2="598" y2="666.6"/>
<line x1="611.2" y1="666.6" x2="627.2" y2="666.6"/><line x1="619.2" y1="659" x2="619.2" y2="674.5"/>
<path d="M641.6 663.3 V659.6 H656.4 V663.3 M641.6 670 V673.8 H656.4 V670" stroke-width="1.3"/>
<line x1="642" y1="666.6" x2="656" y2="666.6" stroke-width="1.3"/>
<polyline points="645.2,663.4 642,666.6 645.2,669.8" stroke-width="1.3"/><polyline points="652.8,663.4 656,666.6 652.8,669.8" stroke-width="1.3"/>
<path d="M674 659.6 H670.6 V673.7 H674 M682 659.6 H685.4 V673.7 H682" stroke-width="1.3"/>
<line x1="678" y1="660" x2="678" y2="673.5" stroke-width="1.3"/>
<polyline points="674.8,663 678,659.9 681.2,663" stroke-width="1.3"/><polyline points="674.8,670.4 678,673.5 681.2,670.4" stroke-width="1.3"/>
<path d="M711.3 662 V673" stroke-width="1.2"/>
<path d="M708.3 661.4 Q711.3 661.2 711.3 662.8 Q711.3 661.2 714.3 661.4 M708.3 673.6 Q711.3 673.8 711.3 672.2 Q711.3 673.8 714.3 673.6" stroke-width="1"/>
<path d="M700.2 664.5 H710.3 M712.4 664.5 H716.4 M700.2 670.5 H710.3 M712.4 670.5 H716.4" stroke-dasharray="1.4 0.6" stroke-width="1"/>
<path d="M700.2 666.5 H702.2 M714.4 666.5 H716.4 M700.2 668.5 H702.2 M714.4 668.5 H716.4" stroke-width="1"/>
<path d="M703.8 667.5 H708.8" stroke-width="1.2"/>
<path d="M742.7 672.2 V663.2 a1.05 1.05 0 0 0 -2.1 0 V666.6 M740.6 666.6 V661.6 a1.05 1.05 0 0 0 -2.1 0 V666.6 M738.5 666.6 V660.8 a1.05 1.05 0 0 0 -2.1 0 V666.6 M736.4 666.6 V661.1 a1.05 1.05 0 0 0 -2.1 0 V669 L731.6 667.9 a0.9 0.9 0 0 0 -0.8 1.3 L736.2 674.6" stroke-width="1.15" stroke-linejoin="round" stroke-linecap="round"/>
<line x1="766" y1="659" x2="766" y2="671" stroke-width="1.3"/>
<polyline points="761.4,667.3 766,671.6 770.6,667.3" stroke-width="1.4"/>
<line x1="761" y1="674.5" x2="771" y2="674.5" stroke-width="1.2"/>
<path d="M792.3 665.8 V659.8 H799.3 V665.8 M792.3 671.7 H788.2 V665.8 H803.4 V671.7 H799.3 M792.3 670 H799.3 V674.2 H792.3 Z" stroke-width="1.3"/>
<circle cx="790.4" cy="667.6" r="0.55" fill="#fff" stroke="none"/>
</svg>
</body></html>
